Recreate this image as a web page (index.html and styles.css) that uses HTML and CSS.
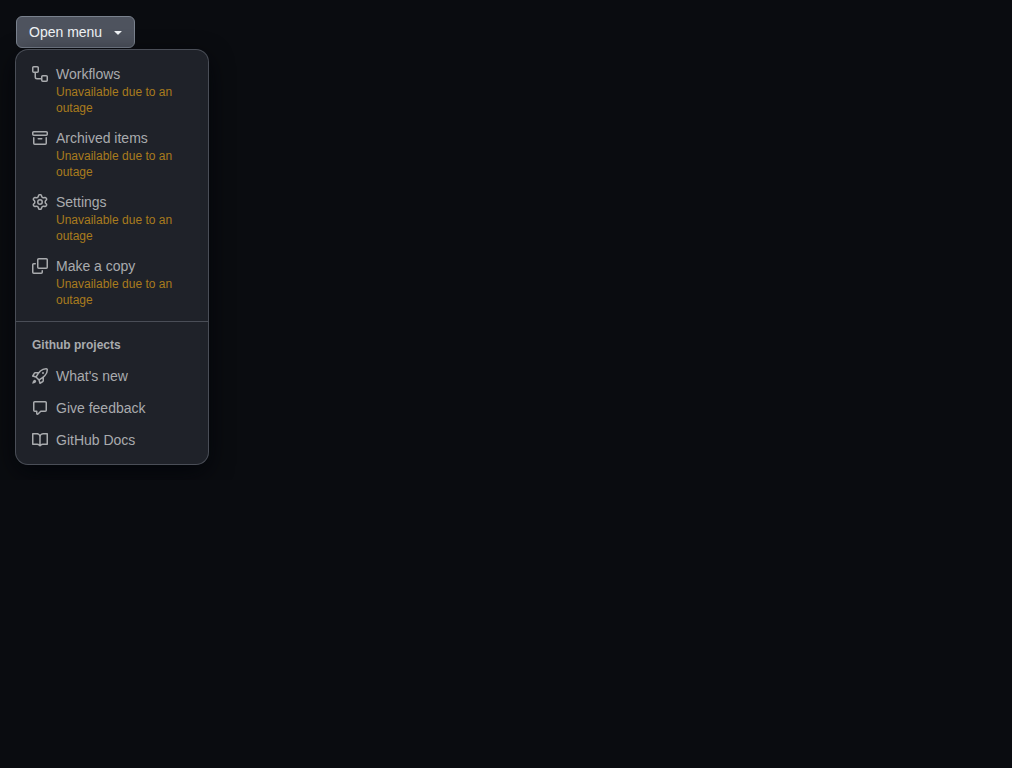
FILE: index.html
```html
<!DOCTYPE html>
<html lang="en">
<head>
<meta charset="utf-8">
<meta name="viewport" content="width=device-width, initial-scale=1">
<title>Project menu</title>
<link rel="stylesheet" href="styles.css">
</head>
<body>
<div class="menu-anchor">
  <button class="menu-button" type="button" aria-haspopup="true" aria-expanded="true" aria-controls="project-menu">
    <span>Open menu</span>
    <svg class="icon" viewBox="0 0 16 16" aria-hidden="true"><path d="m4.427 7.427 3.396 3.396a.25.25 0 0 0 .354 0l3.396-3.396A.25.25 0 0 0 11.396 7H4.604a.25.25 0 0 0-.177.427Z"/></svg>
  </button>
  <div class="overlay" id="project-menu">
    <ul class="group">
      <li>
        <button class="item" type="button" disabled>
          <svg class="icon" viewBox="0 0 16 16" aria-hidden="true"><path d="M0 1.75C0 .784.784 0 1.75 0h3.5C6.216 0 7 .784 7 1.75v3.5A1.75 1.75 0 0 1 5.25 7H4v4a1 1 0 0 0 1 1h4v-1.25C9 9.784 9.784 9 10.75 9h3.5c.966 0 1.75.784 1.75 1.75v3.5A1.75 1.75 0 0 1 14.25 16h-3.5A1.75 1.75 0 0 1 9 14.25v-.75H5A2.5 2.5 0 0 1 2.5 11V7h-.75A1.75 1.75 0 0 1 0 5.25Zm1.75-.25a.25.25 0 0 0-.25.25v3.5c0 .138.112.25.25.25h3.5a.25.25 0 0 0 .25-.25v-3.5a.25.25 0 0 0-.25-.25Zm9 9a.25.25 0 0 0-.25.25v3.5c0 .138.112.25.25.25h3.5a.25.25 0 0 0 .25-.25v-3.5a.25.25 0 0 0-.25-.25Z"/></svg>
          <span class="item-text"><span class="label">Workflows</span><span class="note">Unavailable due to an outage</span></span>
        </button>
      </li>
      <li>
        <button class="item" type="button" disabled>
          <svg class="icon" viewBox="0 0 16 16" aria-hidden="true"><path d="M0 2.75C0 1.784.784 1 1.75 1h12.5c.966 0 1.75.784 1.75 1.75v1.5A1.75 1.75 0 0 1 14.25 6H1.75A1.75 1.75 0 0 1 0 4.25ZM1.75 7a.75.75 0 0 1 .75.75v5.5c0 .138.112.25.25.25h10.5a.25.25 0 0 0 .25-.25v-5.5a.75.75 0 0 1 1.5 0v5.5A1.75 1.75 0 0 1 13.25 15H2.75A1.75 1.75 0 0 1 1 13.25v-5.5A.75.75 0 0 1 1.75 7Zm0-4.5a.25.25 0 0 0-.25.25v1.5c0 .138.112.25.25.25h12.5a.25.25 0 0 0 .25-.25v-1.5a.25.25 0 0 0-.25-.25ZM6.25 8h3.5a.75.75 0 0 1 0 1.5h-3.5a.75.75 0 0 1 0-1.5Z"/></svg>
          <span class="item-text"><span class="label">Archived items</span><span class="note">Unavailable due to an outage</span></span>
        </button>
      </li>
      <li>
        <button class="item" type="button" disabled>
          <svg class="icon" viewBox="0 0 16 16" aria-hidden="true"><path d="M8 0a8.2 8.2 0 0 1 .701.031C9.444.095 9.99.645 10.16 1.29l.288 1.107c.018.066.079.158.212.224.231.114.454.243.668.386.123.082.233.09.299.071l1.103-.303c.644-.176 1.392.021 1.82.63.27.385.506.792.704 1.218.315.675.111 1.422-.364 1.891l-.814.806c-.049.048-.098.147-.088.294.016.257.016.515 0 .772-.01.147.038.246.088.294l.814.806c.475.469.679 1.216.364 1.891a7.977 7.977 0 0 1-.704 1.217c-.428.61-1.176.807-1.82.63l-1.102-.302c-.067-.019-.177-.011-.3.071a5.909 5.909 0 0 1-.668.386c-.133.066-.194.158-.211.224l-.29 1.106c-.168.646-.715 1.196-1.458 1.26a8.006 8.006 0 0 1-1.402 0c-.743-.064-1.289-.614-1.458-1.26l-.289-1.106c-.018-.066-.079-.158-.212-.224a5.738 5.738 0 0 1-.668-.386c-.123-.082-.233-.09-.299-.071l-1.103.303c-.644.176-1.392-.021-1.82-.63a8.12 8.12 0 0 1-.704-1.218c-.315-.675-.111-1.422.363-1.891l.815-.806c.05-.048.098-.147.088-.294a6.214 6.214 0 0 1 0-.772c.01-.147-.038-.246-.088-.294l-.815-.806C.635 6.045.431 5.298.746 4.623a7.92 7.92 0 0 1 .704-1.217c.428-.61 1.176-.807 1.82-.63l1.102.302c.067.019.177.011.3-.071.214-.143.437-.272.668-.386.133-.066.194-.158.211-.224l.29-1.106C6.009.645 6.556.095 7.299.03 7.53.01 7.764 0 8 0Zm-.571 1.525c-.036.003-.108.036-.137.146l-.289 1.105c-.147.561-.549.967-.998 1.189-.173.086-.34.183-.5.29-.417.278-.97.423-1.529.27l-1.103-.303c-.109-.03-.175.016-.195.045-.22.312-.412.644-.573.99-.014.031-.021.11.059.19l.815.806c.411.406.562.957.53 1.456a4.709 4.709 0 0 0 0 .582c.032.499-.119 1.05-.53 1.456l-.815.806c-.081.08-.073.159-.059.19.162.346.353.677.573.989.02.03.085.076.195.046l1.102-.303c.56-.153 1.113-.008 1.53.27.161.107.328.204.501.29.447.222.85.629.997 1.189l.289 1.105c.029.109.101.143.137.146a6.6 6.6 0 0 0 1.142 0c.036-.003.108-.036.137-.146l.289-1.105c.147-.561.549-.967.998-1.189.173-.086.34-.183.5-.29.417-.278.97-.423 1.529-.27l1.103.303c.109.029.175-.016.195-.045.22-.313.411-.644.573-.99.014-.031.021-.11-.059-.19l-.815-.806c-.411-.406-.562-.957-.53-1.456a4.709 4.709 0 0 0 0-.582c-.032-.499.119-1.05.53-1.456l.815-.806c.081-.08.073-.159.059-.19a6.464 6.464 0 0 0-.573-.989c-.02-.03-.085-.076-.195-.046l-1.102.303c-.56.153-1.113.008-1.53-.27a4.44 4.44 0 0 0-.501-.29c-.447-.222-.85-.629-.997-1.189l-.289-1.105c-.029-.11-.101-.143-.137-.146a6.6 6.6 0 0 0-1.142 0ZM11 8a3 3 0 1 1-6 0 3 3 0 0 1 6 0ZM9.5 8a1.5 1.5 0 1 0-3.001.001A1.5 1.5 0 0 0 9.5 8Z"/></svg>
          <span class="item-text"><span class="label">Settings</span><span class="note">Unavailable due to an outage</span></span>
        </button>
      </li>
      <li>
        <button class="item" type="button" disabled>
          <svg class="icon flipped" viewBox="0 0 16 16" aria-hidden="true"><path d="M0 6.75C0 5.784.784 5 1.75 5h1.5a.75.75 0 0 1 0 1.5h-1.5a.25.25 0 0 0-.25.25v7.5c0 .138.112.25.25.25h7.5a.25.25 0 0 0 .25-.25v-1.5a.75.75 0 0 1 1.5 0v1.5A1.75 1.75 0 0 1 9.25 16h-7.5A1.75 1.75 0 0 1 0 14.25Z"/><path d="M5 1.75C5 .784 5.784 0 6.75 0h7.5C15.216 0 16 .784 16 1.75v7.5A1.75 1.75 0 0 1 14.25 11h-7.5A1.75 1.75 0 0 1 5 9.25Zm1.75-.25a.25.25 0 0 0-.25.25v7.5c0 .138.112.25.25.25h7.5a.25.25 0 0 0 .25-.25v-7.5a.25.25 0 0 0-.25-.25Z"/></svg>
          <span class="item-text"><span class="label">Make a copy</span><span class="note">Unavailable due to an outage</span></span>
        </button>
      </li>
    </ul>
    <section class="section" aria-labelledby="projects-heading">
      <h3 class="heading" id="projects-heading">Github projects</h3>
      <ul>
        <li>
          <button class="item" type="button">
            <svg class="icon" viewBox="0 0 16 16" aria-hidden="true"><path d="M14.064 0h.186C15.216 0 16 .784 16 1.75v.186a8.752 8.752 0 0 1-2.564 6.186l-.458.459c-.314.314-.641.616-.979.904v3.207c0 .608-.315 1.172-.833 1.49l-2.774 1.707a.749.749 0 0 1-1.11-.418l-.954-3.102a1.214 1.214 0 0 1-.145-.125L3.754 9.816a1.218 1.218 0 0 1-.124-.145L.528 8.717a.749.749 0 0 1-.418-1.11l1.71-2.774A1.748 1.748 0 0 1 3.31 4h3.204c.288-.338.59-.665.904-.979l.459-.458A8.749 8.749 0 0 1 14.064 0ZM8.938 3.623h-.002l-.458.458c-.76.76-1.437 1.598-2.02 2.5l-1.5 2.317 2.143 2.143 2.317-1.5c.902-.583 1.74-1.26 2.499-2.02l.459-.458a7.25 7.25 0 0 0 2.123-5.127V1.75a.25.25 0 0 0-.25-.25h-.186a7.249 7.249 0 0 0-5.125 2.123ZM3.56 14.56c-.732.732-2.334 1.045-3.005 1.148a.234.234 0 0 1-.201-.064.234.234 0 0 1-.064-.201c.103-.671.416-2.273 1.15-3.003a1.502 1.502 0 1 1 2.12 2.12Zm6.94-3.935c-.088.06-.177.118-.266.175l-2.35 1.521.548 1.783 1.949-1.2a.25.25 0 0 0 .119-.213ZM3.678 8.116 5.2 5.766c.058-.09.117-.178.176-.266H3.309a.25.25 0 0 0-.213.119l-1.2 1.95ZM12 5a1 1 0 1 1-2 0 1 1 0 0 1 2 0Z"/></svg>
            <span class="label">What's new</span>
          </button>
        </li>
        <li>
          <button class="item" type="button">
            <svg class="icon" viewBox="0 0 16 16" aria-hidden="true"><path d="M1 2.75C1 1.784 1.784 1 2.75 1h10.5c.966 0 1.75.784 1.75 1.75v7.5A1.75 1.75 0 0 1 13.25 12H9.06l-2.573 2.573A1.458 1.458 0 0 1 4 13.543V12H2.75A1.75 1.75 0 0 1 1 10.25Zm1.75-.25a.25.25 0 0 0-.25.25v7.5c0 .138.112.25.25.25h2a.75.75 0 0 1 .75.75v2.19l2.72-2.72a.749.749 0 0 1 .53-.22h4.5a.25.25 0 0 0 .25-.25v-7.5a.25.25 0 0 0-.25-.25Z"/></svg>
            <span class="label">Give feedback</span>
          </button>
        </li>
        <li>
          <button class="item" type="button">
            <svg class="icon" viewBox="0 0 16 16" aria-hidden="true"><path d="M0 1.75A.75.75 0 0 1 .75 1h4.253c1.227 0 2.317.59 3 1.501A3.743 3.743 0 0 1 11.006 1h4.245a.75.75 0 0 1 .75.75v10.5a.75.75 0 0 1-.75.75h-4.507a2.25 2.25 0 0 0-1.591.659l-.622.621a.75.75 0 0 1-1.06 0l-.622-.621A2.25 2.25 0 0 0 5.258 13H.75a.75.75 0 0 1-.75-.75Zm7.251 10.324.004-5.073-.002-2.253A2.25 2.25 0 0 0 5.003 2.5H1.5v9h3.757a3.75 3.75 0 0 1 1.994.574ZM8.755 4.75l-.004 7.322a3.752 3.752 0 0 1 1.992-.572H14.5v-9h-3.495a2.25 2.25 0 0 0-2.25 2.25Z"/></svg>
            <span class="label">GitHub Docs</span>
          </button>
        </li>
      </ul>
    </section>
  </div>
</div>
</body>
</html>
```
FILE: styles.css
```css
* {
  box-sizing: border-box;
}

body {
  margin: 0;
  padding: 16px;
  background: #0a0c10;
  color: #a9abae;
  font-family: "Liberation Sans", Arial, sans-serif;
  font-size: 14px;
  line-height: 20px;
}

button {
  margin: 0;
  color: inherit;
  font: inherit;
  text-align: left;
}

ul {
  margin: 0;
  padding: 0;
  list-style: none;
}

.menu-anchor {
  display: flex;
  flex-direction: column;
  align-items: flex-start;
  gap: 2px;
}

.menu-button {
  display: flex;
  align-items: center;
  gap: 8px;
  height: 32px;
  padding: 0 8px 0 12px;
  border: 1px solid #7a828e;
  border-radius: 6px;
  background: #4e535e;
  color: #f0f3f6;
}

.icon {
  flex: none;
  width: 16px;
  height: 16px;
  fill: currentColor;
}

.overlay {
  width: 192px;
  border-radius: 12px;
  background: #1f2229;
  box-shadow: 0 0 0 1px #4a4e57, 0 8px 24px rgba(1, 4, 9, 0.8);
}

.group {
  padding: 8px 8px 7px;
}

.section {
  padding: 8px;
  border-top: 1px solid #4a4e57;
}

.heading {
  margin: 0;
  padding: 6px 8px;
  font-size: 12px;
  font-weight: 700;
  line-height: 18px;
}

.item {
  display: flex;
  align-items: flex-start;
  gap: 8px;
  width: 100%;
  padding: 6px 8px;
  border: 0;
  border-radius: 6px;
  background: transparent;
}

.item .icon {
  margin: 2px 0;
}

.item-text,
.label,
.note {
  display: block;
}

.note {
  color: #a97b1d;
  font-size: 12px;
  line-height: 16px;
}
```
